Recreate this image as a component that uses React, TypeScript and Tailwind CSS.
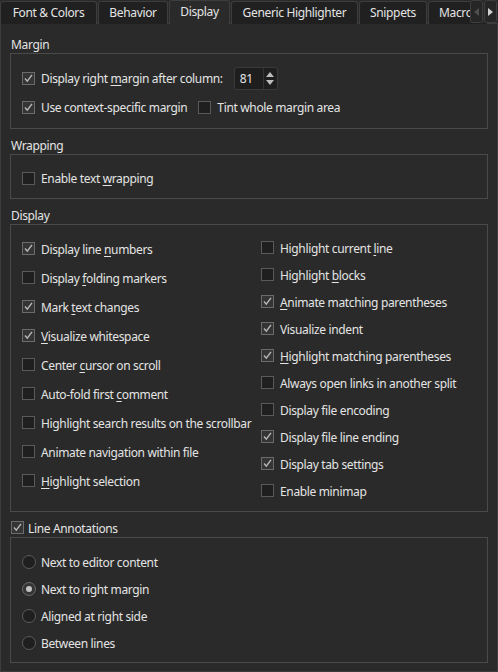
import React from "react";

const font = { fontFamily: '"Noto Sans", "Open Sans", sans-serif' };

// "&x" marks the mnemonic letter, the way Qt labels do
function Label({ text }: { text: string }) {
  const i = text.indexOf("&");
  if (i < 0) return <span className="pt-[2px]">{text}</span>;
  return (
    <span className="pt-[2px]">
      {text.slice(0, i)}
      <span className="underline decoration-1 underline-offset-[2px]">{text[i + 1]}</span>
      {text.slice(i + 2)}
    </span>
  );
}

function Box({ checked }: { checked?: boolean }) {
  return (
    <span
      className={
        "flex h-[13px] w-[13px] shrink-0 items-center justify-center border " +
        (checked ? "border-[#6b6b6b] bg-[#353535]" : "border-[#5a5a5a] bg-[#1f1f1f]")
      }
    >
      {checked && (
        <svg width="11" height="11" viewBox="0 0 11 11">
          <path d="M2 5.5 L4.3 8.2 L9 1.8" fill="none" stroke="#b9b9b9" strokeWidth="1.4" />
        </svg>
      )}
    </span>
  );
}

function Check({ text, checked, gap = "gap-[6px]" }: { text: string; checked?: boolean; gap?: string }) {
  return (
    <div className={"flex items-center whitespace-nowrap " + gap}>
      <Box checked={checked} />
      <Label text={text} />
    </div>
  );
}

function Radio({ text, on }: { text: string; on?: boolean }) {
  return (
    <div className="flex h-[27px] items-center gap-[5px]">
      <span
        className={
          "flex h-[14px] w-[14px] shrink-0 items-center justify-center rounded-full border " +
          (on ? "border-[#6b6b6b] bg-[#353535]" : "border-[#5a5a5a] bg-[#1f1f1f]")
        }
      >
        {on && <span className="h-[6px] w-[6px] rounded-full bg-[#c4c4c4]" />}
      </span>
      <span className="pt-[2px]">{text}</span>
    </div>
  );
}

function Tab({ label, w, active }: { label: string; w: string; active?: boolean }) {
  if (active)
    return (
      <div
        className={
          "relative z-10 flex h-[24px] shrink-0 items-center justify-center rounded-t-[3px] border border-b-0 border-[#3d3d3d] bg-[#2a2a2a] pb-[2px] " +
          w
        }
      >
        {label}
      </div>
    );
  return (
    <div
      className={
        "flex h-[23px] shrink-0 items-center justify-center overflow-hidden rounded-t-[3px] border border-b-0 border-[#3d3d3d] bg-[#202020] " +
        w
      }
    >
      {label}
    </div>
  );
}

function Title({ text }: { text: string }) {
  return <div className="h-[16px] pl-px pt-px leading-[16px]">{text}</div>;
}

export default function App() {
  const left: [string, boolean][] = [
    ["Display line &numbers", true],
    ["Display &folding markers", false],
    ["Mark &text changes", true],
    ["&Visualize whitespace", true],
    ["Center &cursor on scroll", false],
    ["Auto-fold first &comment", false],
    ["Highlight search results on the scrollbar", false],
    ["Animate navigation within file", false],
    ["&Highlight selection", false],
  ];
  const right: [string, boolean][] = [
    ["Highlight current &line", false],
    ["Highlight &blocks", false],
    ["&Animate matching parentheses", true],
    ["Visualize indent", true],
    ["&Highlight matching parentheses", true],
    ["Always open links in another split", false],
    ["Display file encoding", false],
    ["Display file line ending", true],
    ["Display tab settings", true],
    ["Enable minimap", false],
  ];

  return (
    <div
      className="h-[672px] w-[498px] overflow-hidden bg-[#2a2a2a] text-[12px] tracking-[-0.35px] text-[#e4e4e4]"
      style={font}
    >
      {/* tab strip */}
      <div className="flex h-[24px] items-end">
        <div className="flex flex-1 items-end gap-px overflow-hidden">
          <Tab label="Font & Colors" w="w-[97px]" />
          <Tab label="Behavior" w="w-[70px]" />
          <Tab label="Display" w="w-[61px]" active />
          <Tab label="Generic Highlighter" w="w-[127px]" />
          <Tab label="Snippets" w="w-[68px]" />
          <div className="flex h-[23px] w-[60px] shrink-0 items-center overflow-hidden rounded-t-[3px] border border-b-0 border-[#3d3d3d] bg-[#202020] pl-[10px]">
            Macros
          </div>
        </div>
        <div className="absolute left-[470px] top-0 flex h-[23px] gap-px bg-[#2a2a2a]">
          <div className="flex h-[23px] w-[13px] items-center justify-center rounded-[3px] border border-[#3d3d3d] bg-[#262626]">
            <svg width="5" height="8" viewBox="0 0 5 8">
              <path d="M5 0 L0 4 L5 8 Z" fill="#4e4e4e" />
            </svg>
          </div>
          <div className="flex h-[23px] w-[13px] items-center justify-center rounded-[3px] border border-[#3d3d3d] bg-[#262626]">
            <svg width="5" height="8" viewBox="0 0 5 8">
              <path d="M0 0 L5 4 L0 8 Z" fill="#d0d0d0" />
            </svg>
          </div>
        </div>
      </div>

      {/* page */}
      <div className="-mt-px h-[649px] border border-[#3d3d3d] px-[9px] pt-[12px]">
        <Title text="Margin" />
        <div className="mt-px flex h-[76px] flex-col gap-[5px] border border-[#4a4a4a] pl-[11px] pt-[12px]">
          <div className="flex h-[24px] items-center">
            <Check text="Display right &margin after column:" checked />
            <div className="ml-[11px] flex h-[23px] w-[44px] rounded-[3px] border border-[#3a3a3a] bg-[#1e1e1e]">
              <div className="flex flex-1 items-center pl-[5px] pt-px">81</div>
              <div className="flex w-[14px] flex-col items-center justify-center gap-[3px] border-l border-[#333]">
                <svg width="8" height="5" viewBox="0 0 8 5">
                  <path d="M0 5 L4 0 L8 5 Z" fill="#bdbdbd" />
                </svg>
                <svg width="8" height="5" viewBox="0 0 8 5">
                  <path d="M0 0 L4 5 L8 0 Z" fill="#bdbdbd" />
                </svg>
              </div>
            </div>
          </div>
          <div className="flex h-[24px] items-center gap-[11px]">
            <Check text="Use context-specific margin" checked />
            <Check text="Tint whole margin area" />
          </div>
        </div>

        <div className="mt-[8px]">
          <Title text="Wrapping" />
        </div>
        <div className="mt-px flex h-[45px] items-center border border-[#4a4a4a] pl-[11px] pt-[3px]">
          <Check text="Enable text &wrapping" />
        </div>

        <div className="mt-[8px]">
          <Title text="Display" />
        </div>
        <div className="mt-px grid h-[288px] grid-cols-[239px_1fr] border border-[#4a4a4a] pl-[11px] pt-[9px]">
          <div className="flex flex-col">
            {left.map(([t, c]) => (
              <div key={t} className="flex h-[29px] items-center">
                <Check text={t} checked={c} />
              </div>
            ))}
          </div>
          <div className="flex flex-col">
            {right.map(([t, c]) => (
              <div key={t} className="flex h-[27px] items-center">
                <Check text={t} checked={c} />
              </div>
            ))}
          </div>
        </div>

        <div className="mt-[7px] flex h-[17px] items-center pl-px">
          <Check text="Line Annotations" checked gap="gap-[4px]" />
        </div>
        <div className="mt-px h-[126px] border border-[#4a4a4a] pl-[11px] pt-[10px]">
          <Radio text="Next to editor content" />
          <Radio text="Next to right margin" on />
          <Radio text="Aligned at right side" />
          <Radio text="Between lines" />
        </div>
      </div>
    </div>
  );
}
